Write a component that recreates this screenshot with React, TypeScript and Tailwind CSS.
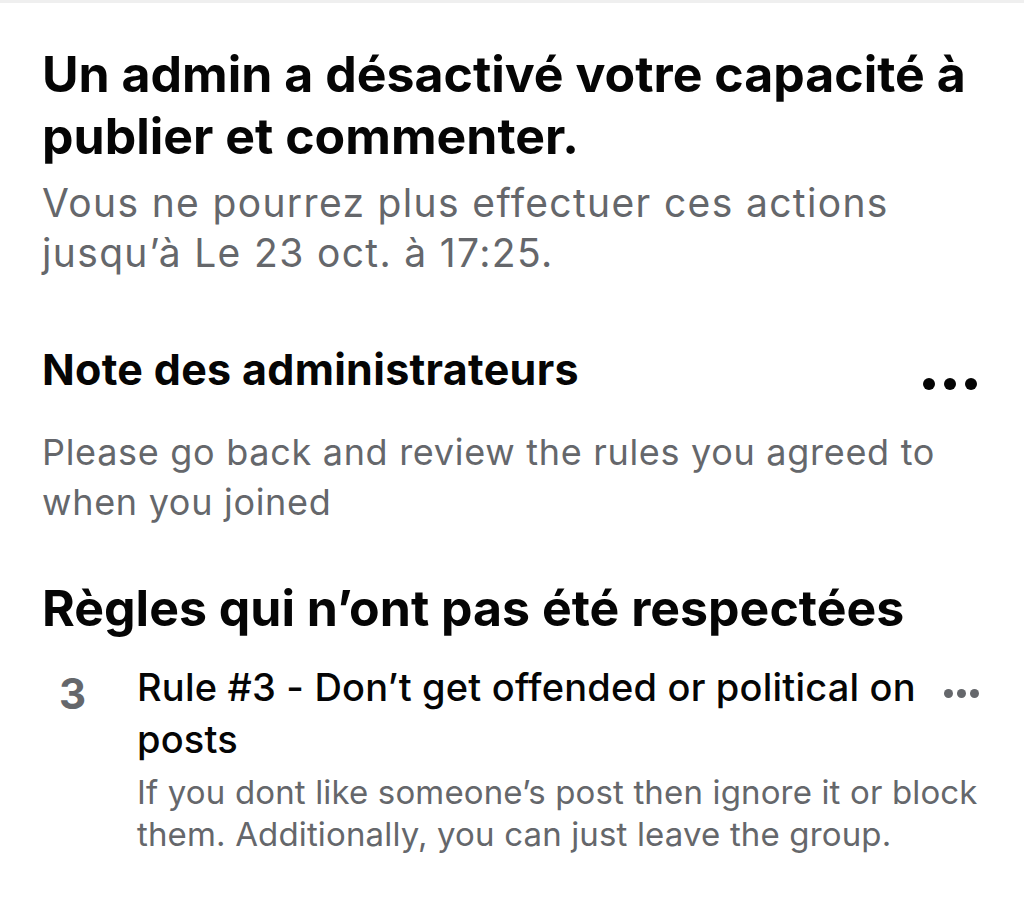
const FONT = "font-['Inter','Liberation_Sans',sans-serif]";

function Dots({ size, gap, color }: { size: string; gap: string; color: string }) {
  return (
    <div className={`flex items-center ${gap}`}>
      <span className={`${size} rounded-full ${color}`} />
      <span className={`${size} rounded-full ${color}`} />
      <span className={`${size} rounded-full ${color}`} />
    </div>
  );
}

export default function App() {
  return (
    <div className={`${FONT} w-[1024px] h-[902px] bg-white border-t-[3px] border-[#efefef] overflow-hidden`}>
      <div className="pl-[42px] pr-[40px] pt-[40px]">
        <h1 className="text-[50px] leading-[62px] font-bold text-[#050505] pr-[10px]">
          Un admin a désactivé votre capacité à publier et commenter.
        </h1>
        <p className="mt-[11px] text-[39px] leading-[50px] tracking-[1.35px] text-[#65676b] pr-[60px]">
          Vous ne pourrez plus effectuer ces actions jusqu’à Le 23 oct. à 17:25.
        </p>

        <div className="mt-[65px] flex items-start justify-between">
          <h2 className="text-[43px] leading-[52px] font-bold tracking-[0.3px] text-[#050505]">
            Note des administrateurs
          </h2>
          <div className="mt-[35px] mr-[7px]">
            <Dots size="w-[12px] h-[12px]" gap="gap-[9px]" color="bg-[#050505]" />
          </div>
        </div>
        <p className="mt-[32px] text-[36px] leading-[50px] tracking-[0.7px] text-[#65676b]">
          Please go back and review the rules you agreed to when you joined
        </p>

        <h2 className="mt-[51px] text-[50px] leading-[60px] font-bold text-[#050505]">
          Règles qui n’ont pas été respectées
        </h2>

        <div className="mt-[23px] flex">
          <div className="w-[95px] shrink-0 pl-[17px] pt-[7px] text-[42px] leading-[52px] font-bold text-[#65676b]">
            3
          </div>
          <div className="flex-1">
            <div className="flex items-start">
              <div className="flex-1 text-[38px] leading-[52px] font-medium tracking-[0.2px] text-[#050505]">
                Rule #3 - Don’t get offended or political on posts
              </div>
              <div className="pt-[28px] pl-[16px] mr-[5px]">
                <Dots size="w-[9px] h-[9px]" gap="gap-[4px]" color="bg-[#65676b]" />
              </div>
            </div>
            <p className="mt-[6px] text-[33px] leading-[42px] tracking-[0.15px] text-[#65676b]">
              If you dont like someone’s post then ignore it or block them. Additionally, you can just leave the group.
            </p>
          </div>
        </div>
      </div>
    </div>
  );
}
